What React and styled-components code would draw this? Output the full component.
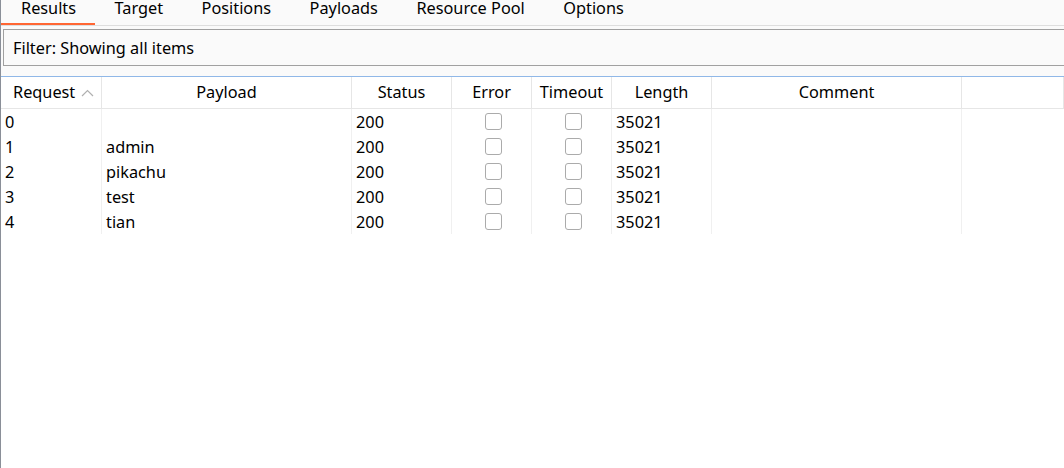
import React from "react";
import styled, { createGlobalStyle } from "styled-components";

const Global = createGlobalStyle`
  html, body { margin: 0; padding: 0; background: #ffffff; }
  body { font-family: "Noto Sans", "Segoe UI", sans-serif; color: #000; }
  * { box-sizing: border-box; }
`;

const Window = styled.div`
  width: 1064px;
  height: 468px;
  overflow: hidden;
  display: flex;
  flex-direction: column;
  background: #ffffff;
  border-left: 1px solid #8a8f98;
`;

const TabBar = styled.div`
  display: flex;
  height: 26px;
  background: #fafafa;
  border-bottom: 1px solid #dedede;
`;

const Tab = styled.div`
  height: 25px;
  padding: 1px 18.5px 0 20px;
  font-size: 16.3px;
  line-height: 15px;
  white-space: nowrap;
  border-bottom: 2px solid ${(p) => (p.$active ? "#ff6633" : "transparent")};
`;

const FilterArea = styled.div`
  background: #fafafa;
  padding: 3px 0 10px 2px;
`;

const FilterBox = styled.div`
  height: 37px;
  margin-right: -4px;
  border: 1px solid #a0a0a0;
  background: #fafafa;
  display: flex;
  align-items: center;
  padding-left: 9px;
  font-size: 16.3px;
`;

const Table = styled.div`
  display: grid;
  grid-template-columns: 101px 250px 100px 80px 80px 100px 250px 1fr;
  grid-template-rows: 32px;
  grid-auto-rows: 25px;
  border-top: 1px solid #90b8e8;
  font-size: 16.3px;
  align-content: start;
`;

const HeaderRow = styled.div`
  display: contents;
`;

const HeadCell = styled.div`
  display: flex;
  align-items: center;
  justify-content: ${(p) => (p.$left ? "flex-start" : "center")};
  padding-left: ${(p) => (p.$left ? "12px" : "0")};
  padding-bottom: 1px;
  border-right: 1px solid #e6e6e6;
  border-bottom: 1px solid #e6e6e6;
  white-space: nowrap;
`;

const Cell = styled.div`
  display: flex;
  align-items: center;
  justify-content: ${(p) => (p.$center ? "center" : "flex-start")};
  padding-left: ${(p) => (p.$center ? "0" : "4px")};
  border-right: 1px solid ${(p) => (p.$last ? "transparent" : "#f0f0f0")};
  white-space: nowrap;
`;

const Check = styled.span`
  width: 17px;
  height: 17px;
  border: 1px solid #ababab;
  border-radius: 3px;
  background: #fff;
  margin-left: 4px;
`;

const Caret = styled.svg`
  margin-left: 6px;
  margin-top: 2px;
`;

const tabs = ["Results", "Target", "Positions", "Payloads", "Resource Pool", "Options"];
const rows = [
  ["0", ""],
  ["1", "admin"],
  ["2", "pikachu"],
  ["3", "test"],
  ["4", "tian"],
];

export default function App() {
  return (
    <>
      <Global />
      <Window>
        <TabBar>
          {tabs.map((t, i) => (
            <Tab key={t} $active={i === 0}>
              {t}
            </Tab>
          ))}
        </TabBar>
        <FilterArea>
          <FilterBox>Filter: Showing all items</FilterBox>
        </FilterArea>
        <Table>
          <HeaderRow>
            <HeadCell $left>
              Request
              <Caret width="13" height="8" viewBox="0 0 13 8">
                <path d="M1 7 L6.5 1.5 L12 7" fill="none" stroke="#b0b0b0" strokeWidth="1.2" />
              </Caret>
            </HeadCell>
            <HeadCell>Payload</HeadCell>
            <HeadCell>Status</HeadCell>
            <HeadCell>Error</HeadCell>
            <HeadCell>Timeout</HeadCell>
            <HeadCell>Length</HeadCell>
            <HeadCell>Comment</HeadCell>
            <HeadCell />
          </HeaderRow>
          {rows.map(([n, p]) => (
            <React.Fragment key={n}>
              <Cell>{n}</Cell>
              <Cell>{p}</Cell>
              <Cell>200</Cell>
              <Cell $center>
                <Check />
              </Cell>
              <Cell $center>
                <Check />
              </Cell>
              <Cell>35021</Cell>
              <Cell />
              <Cell $last />
            </React.Fragment>
          ))}
        </Table>
      </Window>
    </>
  );
}
